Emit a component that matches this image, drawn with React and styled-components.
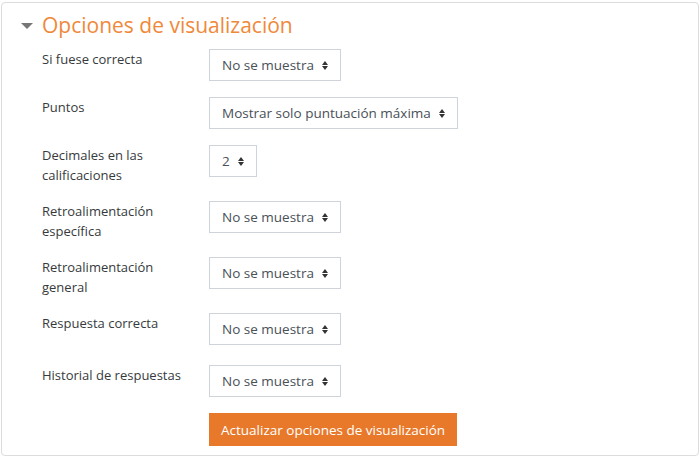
import React from "react";
import styled, { createGlobalStyle } from "styled-components";

const G = createGlobalStyle`
  body { margin: 0; background: #fff; font-family: "Open Sans", "Liberation Sans", sans-serif; }
`;
const Card = styled.div`
  margin: 2px 1px 2px 1px; height: 454px; box-sizing: border-box;
  border: 1px solid #dcdcdc; border-radius: 4px; padding: 8px 0 0 19px;
`;
const Title = styled.h3`
  margin: 0 0 10px; display: flex; align-items: center; gap: 9px;
  font-weight: 400; font-size: 21px; color: #f0883a; line-height: 28px;
`;
const Caret = styled.span`
  width: 0; height: 0; border-left: 6px solid transparent; border-right: 6px solid transparent;
  border-top: 6px solid #777; margin-top: 2px;
`;
const Form = styled.div`
  padding-left: 21px; display: grid; grid-template-columns: 167px auto; row-gap: 16px;
  justify-content: start; align-items: start;
`;
const Label = styled.div`
  font-size: 13px; line-height: 20px; color: #373a3c; padding-top: 0; width: 140px;
`;
const Select = styled.div`
  justify-self: start; height: 32px; box-sizing: border-box; border: 1px solid #ced4da;
  padding: 0 12px; display: flex; align-items: center; gap: 8px;
  font-size: 13.5px; color: #495057; background: #fff;
`;
const Arrows = styled.span`
  display: inline-flex; flex-direction: column; gap: 1px;
  &::before, &::after { content: ""; border-left: 3.5px solid transparent; border-right: 3.5px solid transparent; }
  &::before { border-bottom: 4px solid #333; }
  &::after { border-top: 4px solid #333; }
`;
const Button = styled.button`
  grid-column: 2; justify-self: start; height: 33px; padding: 0 12px; border: none;
  background: #e8792a; color: #fff; font-family: inherit; font-size: 13.5px;
`;

const rows = [
  ["Si fuese correcta", "No se muestra", 0],
  ["Puntos", "Mostrar solo puntuación máxima", 0],
  ["Decimales en las calificaciones", "2", 4],
  ["Retroalimentación específica", "No se muestra", 0],
  ["Retroalimentación general", "No se muestra", -4],
  ["Respuesta correcta", "No se muestra", 4],
  ["Historial de respuestas", "No se muestra", 0],
];

export default function App() {
  return (
    <>
      <G />
      <Card>
        <Title><Caret />Opciones de visualización</Title>
        <Form>
          {rows.map(([l, v, d]) => (
            <React.Fragment key={l}>
              <Label>{l}</Label>
              <Select style={d ? { marginBottom: d } : undefined}>{v}<Arrows /></Select>
            </React.Fragment>
          ))}
          <Button>Actualizar opciones de visualización</Button>
        </Form>
      </Card>
    </>
  );
}
